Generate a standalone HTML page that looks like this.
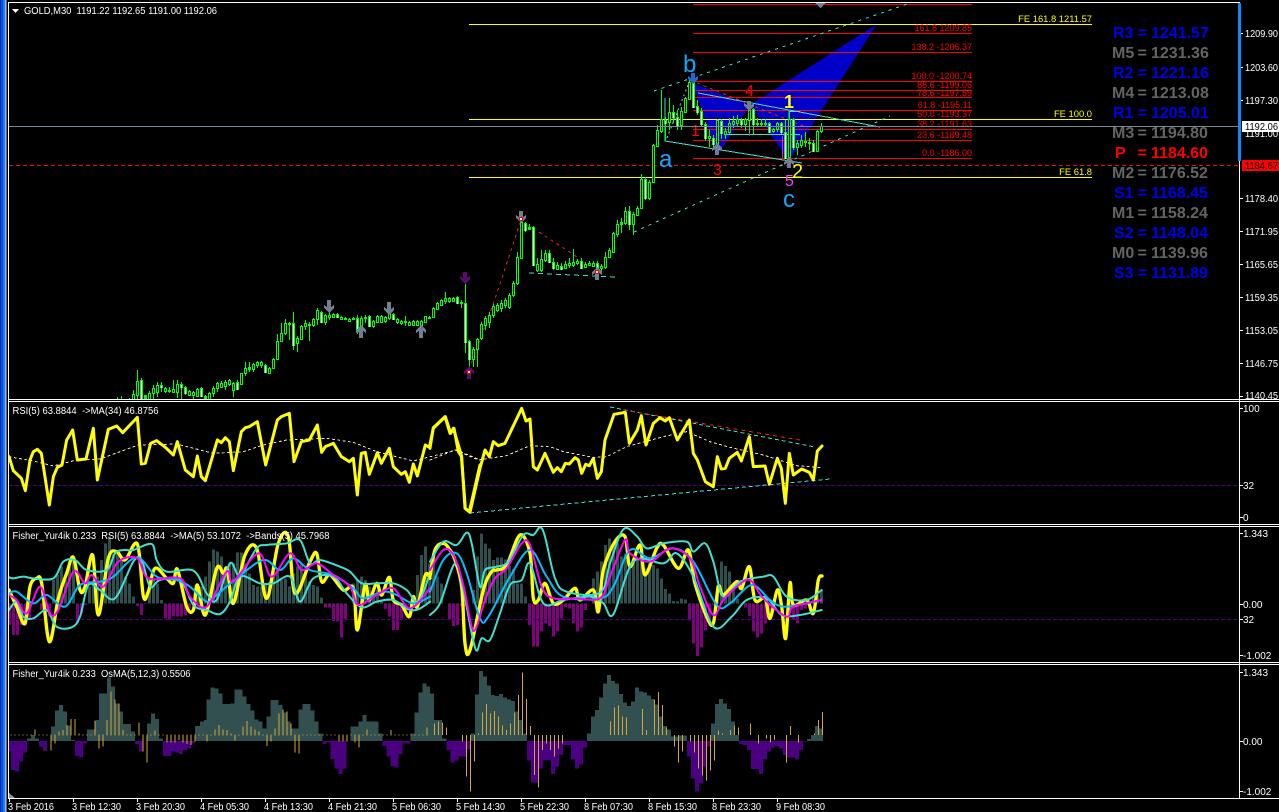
<!DOCTYPE html>
<html><head><meta charset="utf-8"><style>
html,body{margin:0;padding:0;background:#000;width:1279px;height:812px;overflow:hidden}
svg{display:block}
text{font-family:"Liberation Sans",sans-serif;white-space:pre}
.t{font-size:10px;fill:#fff}
.f{font-size:9px;fill:#f00}
.y{font-size:9.4px;fill:#ff0}
.p{font-size:16px;font-weight:bold}
.l{fill:none;stroke-linejoin:round;stroke-linecap:round}
</style></head><body>
<svg width="1279" height="812" viewBox="0 0 1279 812" xmlns="http://www.w3.org/2000/svg">
<defs>
<pattern id="st" x="3" y="0" width="4" height="10" patternUnits="userSpaceOnUse"><rect width="1" height="10" fill="#000"/></pattern>
<clipPath id="cp"><rect x="9" y="3" width="1230" height="396"/></clipPath>
<clipPath id="cr"><rect x="9" y="402" width="1230" height="122"/></clipPath>
<clipPath id="cf"><rect x="9" y="527" width="1230" height="135"/></clipPath>
<clipPath id="fu"><rect x="9" y="527" width="1230" height="77"/></clipPath>
<clipPath id="fd"><rect x="9" y="604" width="1230" height="58"/></clipPath>
<clipPath id="ou"><rect x="9" y="665" width="1230" height="76"/></clipPath>
<clipPath id="od"><rect x="9" y="741" width="1230" height="57"/></clipPath>
<path id="h1" d="M24 250V315h12V345h12V345h12V315h12V318h12V295h12V250h12V250h12V270h12V272h12V290h12V180h12V165h12V140h12V178h12V140h12V120h12V310h12V280h12V255h12V200h12V180h12V170h12V120h12V70h12V50h12V100h12V100h12V120h12V170h12V190h12V230h12V258h12V285h12V252h12V190h12V180h12V190h12V240h12V295h12V298h12V288h12V290h12V290h12V285h12V265h12V250h12V190h12V200h12V170h12V125h12V88h12V95h12V110h12V140h12V130h12V130h12V97h12V97h12V130h12V160h12V195h12V200h12V200h12V195h12V185h12V160h12V150h12V180h12V175h12V200h12V160h12V140h12V130h12V165h12V185h12V195h12V200h12V232h12V263h12V262h12V303h12V305h12V352h12V297h12V250h12V190h12V180h12V170h12V180h12V200h12V220h12V210h12V240h12V267h12V290h12V330h12V330h12V295h12V255h12V255h12V250h12V165h12V105h12V80h12V130h12V100h12V190h12V250z"/>
<path id="h2" d="M18 250V170h12V190h12V250h12V300h12V318h12V315h12V258h12V260h12V250h12V210h12V110h12V40h12V70h12V85h12V120h12V113h12V113h12V118h12V138h12V147h12V190h12V190h12V230h12V315h12V380h12V380h12V335h12V310h12V318h12V350h12V335h12V295h12V262h12V265h12V310h12V335h12V323h12V270h12V250h12V175h12V155h12V125h12V75h12V55h12V80h12V70h12V110h12V100h12V130h12V125h12V115h12V100h12V145h12V130h12V135h12V145h12V175h12V207h12V220h12V243h12V245h12V235h12V238h12V302h12V370h12V408h12V382h12V332h12V300h12V255h12V195h12V125h12V138h12V155h12V200h12V235h12V250h12V262h12V288h12V335h12V352h12V340h12V310h12V270h12V255h12V250h12V250h12V250h12V270h12V300h12V310h12V270h12V265h12V250h12V235h12V225h12V210h12V250z"/>
<path id="o1" d="M27 663V695H33V750H45V755H57V725H69V698H81V655H93V645H105V655H117V680H129V693H141V663H153V620H165V572H177V555H189V575H201V617H213V660H225V708H237V712H249V670H261V628H285V600H297V520H321V473H333V500H345V550H357V575H369V612H393V635H405V672H417V695H429V663H441V610H453V580H465V597H477V655H489V708H513V695H525V697H537V702H549V690H561V685H573V670H585V618H600V605H612V600H620V538H632V502H644V505H656V520H668V552H692V550H704V508H728V530H740V552H752V572H764V598H776V605H788V625H800V590H812V540H836V555H848V577H860V605H872V625H896V568H908V552H932V572H944V605H956V640H968V672H980V668H992V717H1004V745H1016V762H1028V745H1040V663H1052V620H1076V605H1088V585H1100V605H1136V640H1148V678H1160V710H1172V738H1184V742H1196V702H1208V670H1232V640H1244V578H1256V518H1268V490H1280V500H1290V663z"/>
<path id="o2" d="M0 663V520H12V600H36V655H50V690H62V728H74V722H86V710H108V688H122V640H135V523H147V453H159V470H171V497H183V525H195V528H207V522H219V532H231V538H243V543H255V575H267V600H279V640H291V722H303V788H327V745H339V720H363V762H375V740H387V703H399V675H423V718H435V745H447V733H459V682H471V640H483V590H495V570H507V533H519V490H531V465H543V483H555V490H567V522H579V548H591V558H603V545H615V503H627V515H639V518H651V527H663V537H675V553H687V590H699V618H711V628H723V650H747V647H771V710H783V775H795V815H807V790H819V740H831V680H843V610H855V552H867V537H879V550H891V567H903V605H915V645H927V672H939V675H951V690H963V747H987V762H999V718H1011V695H1023V682H1035V678H1047V685H1059V705H1071V712H1095V718H1107V690H1119V665H1131V657H1143V645H1155V618H1167V625H1179V663z"/>
</defs>
<rect width="1279" height="812" fill="#000"/>
<g shape-rendering="crispEdges">
<rect x="0" y="0" width="1" height="812" fill="#0033a8"/>
<rect x="1" y="0" width="2" height="812" fill="#0a50e0"/>
<rect x="3" y="0" width="2" height="812" fill="#1f78f8"/>
<rect x="5" y="0" width="1" height="812" fill="#8fb8e8"/>
<rect x="6" y="0" width="1" height="812" fill="#606870"/>
<!-- main pane lines -->
<g clip-path="url(#cp)">
<polygon points="692,83 718,155 750,105" fill="#0000c8"/>
<polygon points="750,105 789,161 877,24" fill="#0000c8"/>
<g stroke="#ff0" fill="none"><path d="M469 24.5H1092M469 119.5H1092M469 177.5H1092"/></g>
<g stroke="#f00" fill="none"><path d="M693 4.5H972M693 33.5H972M693 52.5H972M693 81.5H972M693 90.5H972M693 97.5H972M693 110.5H972M693 129.5H972M693 140.5H972M693 158.5H972"/></g>
<path d="M9 165.5H1239" stroke="#e01010" stroke-dasharray="4 3" fill="none"/>
<g fill="none" stroke="#40e0d0">
<path d="M654 91L925 -2M634 232L890 116" stroke-dasharray="3 5"/>
<path d="M529 273L616 277" stroke-dasharray="5 4"/>
<path d="M667 138L690 80" stroke-dasharray="2 3"/>
<path d="M665 98V141L802 163M698 93L880 127M727 134.5H800M711 126.5H800M789 111V120M789 111.5H800"/>
</g>
<g fill="none" stroke="#f02010" stroke-dasharray="3 4">
<path d="M697 83L808 128M469 370L496 296L520 223M539 232L577 257"/>
</g>
<path d="M749.5 120V136M782.5 136V158" stroke="#e020e0" fill="none"/>
<!-- candles -->
<g transform="translate(.5 0)" fill="none">
<path stroke="#0f0" d="M117 397V399M121 396V399M129 398V399M133 390V399M137 370V399M141 378V399M145 395V399M149 391V399M153 385V399M157 382V397M161 382V392M165 387V393M169 387V393M173 380V393M177 380V398M181 382V399M185 386V395M189 390V396M193 391V399M197 388V397M201 387V397M205 395V399M209 392V399M213 386V397M217 382V392M221 381V388M225 380V390M229 379V386M233 382V397M237 380V390M241 373V385M245 362V376M249 362V372M253 363V372M257 361V368M261 361V368M265 364V373M269 367V374M273 358V369M277 334V360M281 323V342M285 319V335M289 322V340M293 312V350M297 336V352M301 325V340M305 320V330M309 322V341M313 318V327M317 308V325M321 311V323M325 314V325M329 308V320M333 313V318M337 313V318M341 316V320M345 317V320M349 318V322M353 317V320M357 315V334M361 316V332M365 315V323M369 315V327M373 320V328M377 315V323M381 315V323M385 316V323M389 310V320M393 313V320M397 318V324M401 320V325M405 316V326M409 321V326M413 320V326M417 320V326M421 320V327M425 316V323M429 316V319M433 307V318M437 302V310M441 299V306M445 292V304M449 297V303M453 297V302M457 296V304M461 300V308M465 279V353M469 340V375M473 347V367M477 338V367M481 322V340M485 316V330M489 312V328M493 304V318M497 303V312M501 300V312M505 298V308M509 293V309M513 281V297M517 252V285M521 218V259M525 222V232M529 224V230M533 226V266M537 258V272M541 250V272M545 250V262M549 250V263M553 258V270M557 262V270M561 263V270M565 261V269M569 258V268M573 249V267M577 259V265M581 258V269M585 262V268M589 261V266M593 261V267M597 261V272M601 264V272M605 252V269M609 248V258M613 232V253M617 220V237M621 218V233M625 207V225M629 206V230M633 212V235M637 206V216M641 174V209M645 177V200M649 180V200M653 144V183M657 125V147M661 90V133M665 117V140M669 98V130M673 105V123M677 110V130M681 107V130M685 97V113M689 80V100M693 73V108M697 100V115M701 108V126M705 122V141M709 130V147M713 135V150M717 119V153M721 119V139M725 128V139M729 118V134M733 116V128M737 115V126M741 118V128M745 118V131M749 102V133M753 108V135M757 118V126M761 119V127M765 119V126M769 122V133M773 128V133M777 122V132M781 122V134M785 120V159M789 111V159M793 118V150M797 140V155M801 135V148M805 132V147M809 138V150M813 140V152M817 130V152M821 123V133"/>
<path stroke="#0f0" stroke-width="3" d="M133 394V399M137 381V396M141 380V399M145 395V399M149 393V399M153 388V394M157 385V393M161 385V388M165 388V392M169 390V392M173 389V393M177 384V393M181 384V388M185 387V394M189 391V396M193 392V396M197 389V397M201 388V397M205 396V399M209 393V399M213 388V394M217 383V389M221 383V388M225 382V387M229 380V385M233 383V391M237 382V390M241 373V385M245 368V374M249 367V370M253 364V370M257 362V366M261 362V366M265 365V373M269 368V374M273 359V369M277 341V360M281 333V342M285 323V334M289 323V325M293 323V346M297 338V344M301 326V340M305 323V327M309 324V326M313 319V326M317 310V320M321 312V323M325 315V323M329 315V318M333 314V318M337 314V318M341 317V320M345 318V320M349 319V322M353 318V320M357 318V332M361 318V332M365 317V319M369 316V327M373 321V327M377 316V323M381 316V323M385 317V322M389 313V319M393 314V320M397 319V323M401 321V324M405 321V323M409 322V326M413 321V326M417 321V326M421 321V326M425 316V323M429 317V319M433 308V318M437 303V310M441 300V306M445 298V302M449 298V302M453 298V302M457 297V304M461 302V304M465 303V343M469 341V360M473 349V360M477 339V350M481 324V339M485 318V326M489 315V323M493 306V316M497 305V311M501 303V309M505 300V306M509 295V308M513 283V296M517 257V284M521 222V259M525 223V231M529 227V230M533 227V266M537 264V271M541 259V271M545 253V261M549 253V263M553 262V269M557 265V270M561 266V270M565 264V269M569 263V266M573 262V266M577 261V264M581 261V269M585 264V268M589 263V266M593 263V267M597 263V271M601 266V269M605 257V268M609 250V258M613 233V253M617 224V235M621 222V225M625 211V224M629 211V225M633 214V225M637 208V216M641 179V209M645 179V199M649 182V199M653 145V183M657 130V147M661 119V132M665 120V124M669 112V123M673 112V118M677 117V126M681 111V126M685 98V113M689 82V100M693 82V108M697 106V113M701 111V125M705 124V139M709 136V139M713 138V145M717 120V146M721 121V134M725 131V135M729 123V133M733 121V125M737 119V124M741 120V125M745 119V125M749 110V121M753 109V125M757 123V125M761 123V125M765 123V125M769 123V133M773 129V132M777 123V130M781 123V133M785 132V159M789 119V158M793 119V148M797 143V148M801 140V146M805 141V143M809 142V144M813 143V152M817 131V152M821 126V132"/>
<path stroke="#000" d="M133 395V399M137 382V395M149 394V399M153 389V393M157 386V392M165 389V391M173 390V392M177 385V392M189 392V395M193 393V395M197 390V396M209 394V399M213 389V393M217 384V388M221 384V387M225 383V386M229 381V384M233 384V390M241 374V384M245 369V373M253 365V369M257 363V365M261 363V365M269 369V373M273 360V368M277 342V359M281 334V341M285 324V333M297 339V343M301 327V339M305 324V326M313 320V325M317 311V319M325 316V322M329 316V317M333 315V317M341 318V319M349 320V321M361 319V331M373 322V326M377 317V322M381 317V322M385 318V321M389 314V318M397 320V322M401 322V323M409 323V325M413 322V325M417 322V325M421 322V325M425 317V322M433 309V317M437 304V309M441 301V305M445 299V301M449 299V301M453 299V301M473 350V359M477 340V349M481 325V338M485 319V325M489 316V322M493 307V315M497 306V310M501 304V308M505 301V305M509 296V307M513 284V295M517 258V283M521 223V258M537 265V270M541 260V270M545 254V260M557 266V269M565 265V268M569 264V265M573 263V265M577 262V263M585 265V267M589 264V265M593 264V266M601 267V268M605 258V267M609 251V257M613 234V252M617 225V234M625 212V223M633 215V224M637 209V215M641 180V208M649 183V198M653 146V182M657 131V146M661 120V131M669 113V122M681 112V125M685 99V112M689 83V99M709 137V138M717 121V145M725 132V134M729 124V132M733 122V124M737 120V123M745 120V124M749 111V120M773 130V131M777 124V129M789 120V157M797 144V147M801 141V145M817 132V151M821 127V131"/>
<path stroke="#fff" d="M141 381V399M161 386V388M181 385V388M185 388V394M201 389V397M237 383V390M265 366V373M293 324V346M321 313V323M337 315V318M357 319V332M369 317V327M393 315V320M457 298V304M465 304V343M469 342V360M525 224V231M533 228V266M549 254V263M553 263V269M561 267V270M581 262V269M597 264V271M629 212V225M645 180V199M665 121V124M673 113V118M677 118V126M693 83V108M697 107V113M701 112V125M705 125V139M713 139V145M721 122V134M741 121V125M753 110V125M769 124V133M781 124V133M785 133V159M793 120V148M813 144V152"/>
</g>
<!-- arrows -->
<g fill="#708090">
<path d="M327 300h4v7l3-2v3l-5 5l-5-5v-3l3 2z"/>
<path d="M387 302h4v7l3-2v3l-5 5l-5-5v-3l3 2z"/>
<path d="M519 211h4v6l3-2v3l-5 5l-5-5v-3l3 2z"/>
<path d="M747 101h4v4l3-2v3l-5 5l-5-5v-3l3 2z"/>
<path d="M359 338h4v-7l3 2v-3l-5-5l-5 5v3l3-2z"/>
<path d="M419 338h4v-7l3 2v-3l-5-5l-5 5v3l3-2z"/>
<path d="M595 280h4v-7l3 2v-3l-5-5l-5 5v3l3-2z"/>
<path d="M715 155h4v-6l3 2v-3l-5-5l-5 5v3l3-2z"/>
<path d="M787 168h4v-5l3 2v-3l-5-5l-5 5v3l3-2z"/>
<path d="M815 3h11l-5.500 5z"/>
</g>
<g fill="#5a0a6e">
<path d="M463 272h4v6l3-2v3l-5 5l-5-5v-3l3 2z"/>
<path d="M467 379h4v-7l3 2v-3l-5-5l-5 5v3l3-2z"/>
</g>
<path d="M691 73h4v5l3-2v3l-5 5l-5-5v-3l3 2z" fill="#1e6ad0"/>
<g fill="#fff" stroke="#f00"><rect x="519.500" y="217.500" width="3" height="3"/><rect x="595.500" y="270.500" width="3" height="3"/><rect x="467.500" y="370.500" width="3" height="3"/></g>
</g>
<!-- RSI pane -->
<g clip-path="url(#cr)">
<path d="M9 485.500H1239" stroke="#4b0082" stroke-dasharray="4 2" fill="none"/>
<g fill="none" stroke="#40e0d0" stroke-dasharray="4 3">
<path d="M470 513L830 479M610 407L815 447"/>
</g>
<path d="M623 410L800 440" stroke="#f02010" stroke-dasharray="4 4" fill="none"/>
<g transform="translate(0 260) scale(.33333)" class="l" stroke="#ffe4c4" stroke-width="3" stroke-linecap="butt" stroke-dasharray="6 10">
<polyline points="27,590 100,603 160,618 230,600 300,597 360,575 415,555 530,552 640,580 730,575 790,555 860,540 980,535 1060,547 1130,575 1240,603 1370,570 1440,600"/>
</g>
<g transform="translate(430 395) scale(.33333)" class="l" stroke="#ffe4c4" stroke-width="3" stroke-linecap="butt" stroke-dasharray="6 10">
<polyline points="0,195 75,165 145,195 230,182 300,152 360,155 400,170 490,187 530,185 590,155 700,125 770,110 840,140 900,157 1000,180 1100,212 1170,218"/>
</g>
</g>
</g>
<g clip-path="url(#cr)">
<g transform="translate(0 260) scale(.33333)" class="l" stroke="#ff0" stroke-width="9">
<polyline points="27,590 40,632 64,655 76,692 90,600 100,575 112,568 124,580 148,735 160,650 172,622 186,615 200,540 218,510 232,600 258,597 280,505 292,660 325,508 350,498 368,518 412,472 424,612 436,610 452,550 470,542 496,562 520,585 532,545 556,630 580,650 592,588 604,650 616,662 652,540 664,548 676,533 688,545 700,632 724,515 736,503 748,500 772,485 797,615 832,480 844,470 868,460 882,605 904,545 928,540 952,495 965,577 976,560 988,555 1000,550 1024,590 1048,605 1060,595 1072,705 1084,580 1096,577 1108,643 1132,578 1144,610 1168,565 1180,620 1204,643 1216,635 1228,667 1240,612 1252,648 1276,555 1288,562 1300,505 1336,470 1352,520 1360,505 1384,585 1396,745 1408,755 1440,615"/>
</g>
<g transform="translate(430 395) scale(.33333)" class="l" stroke="#ff0" stroke-width="9">
<polyline points="0,160 10,98 45,65 60,115 72,100 85,170 95,185 105,340 120,352 150,220 165,165 178,185 190,140 205,152 225,145 275,40 288,78 300,72 310,215 322,225 345,175 370,232 382,218 394,230 406,205 418,207 435,188 445,195 455,235 467,208 478,212 490,190 502,250 514,230 525,135 552,58 586,52 598,145 622,105 634,62 648,150 670,85 690,68 706,78 718,68 742,135 778,75 790,175 802,195 826,260 850,275 862,185 874,222 886,220 898,190 922,172 934,198 958,125 970,215 1005,213 1018,268 1042,190 1054,220 1066,325 1078,175 1090,240 1115,222 1138,232 1150,255 1162,168 1176,153"/>
</g>
</g>
<!-- Fisher pane -->
<g shape-rendering="crispEdges">
<g clip-path="url(#fu)" fill="#2f4f4f"><g transform="translate(0 520) scale(.33333)"><use href="#h1"/></g><g transform="translate(430 520) scale(.33333)"><use href="#h2"/></g></g>
<g clip-path="url(#fd)" fill="#800080"><g transform="translate(0 520) scale(.33333)"><use href="#h1"/></g><g transform="translate(430 520) scale(.33333)"><use href="#h2"/></g></g>
<rect x="9" y="527" width="1230" height="135" fill="url(#st)"/>
<path d="M9 619.500H1239" stroke="#4b0082" stroke-dasharray="4 2" fill="none"/>
</g>
<g clip-path="url(#cf)">
<g transform="translate(0 520) scale(.33333)" class="l">
<polyline class="sm" stroke="#ff0" stroke-width="10" points="27,210 50,260 75,310 90,200 110,175 125,190 148,365 175,235 200,160 220,112 240,210 255,200 278,105 295,285 325,115 350,95 375,120 412,72 430,228 445,215 465,145 500,175 520,190 532,148 560,260 580,270 592,195 616,285 650,145 670,160 682,148 700,250 735,105 770,85 800,235 835,70 865,50 885,220 930,125 950,100 965,185 990,165 1030,210 1060,205 1072,330 1095,195 1108,240 1130,190 1145,225 1168,172 1180,240 1205,255 1228,290 1240,230 1252,260 1276,165 1290,175"/>
<polyline class="sm" stroke="#40e0d0" stroke-width="6" points="27,172 40,175 70,170 100,175 160,175 190,125 225,120 260,150 320,150 345,100 370,90 400,90 455,72 470,120 500,155 580,152 620,220 650,240 690,130 720,165 770,85 800,75 860,70 900,60 930,130 960,120 1020,140 1050,155 1085,190 1130,190 1180,190 1220,210 1255,245 1290,160"/>
<polyline class="sm" stroke="#40e0d0" stroke-width="6" points="27,270 50,245 70,290 100,295 140,270 170,320 215,322 240,290 265,195 300,210 345,235 400,125 425,120 450,200 480,180 540,178 580,255 620,270 660,282 690,245 720,170 780,190 820,190 870,170 900,245 940,175 1000,170 1040,220 1085,262 1130,245 1180,240 1225,268 1255,268 1290,245"/>
<polyline class="sm" stroke="#00bfff" stroke-width="6" points="27,220 50,215 100,250 140,225 195,260 240,195 300,185 340,170 410,112 470,170 530,180 570,200 620,245 650,225 710,175 790,120 840,150 880,115 930,150 1000,165 1060,205 1090,235 1150,215 1190,225 1240,250 1290,230"/>
<polyline class="sm" stroke="#f0f" stroke-width="6" points="27,225 50,240 80,280 120,200 150,280 175,270 220,155 255,190 275,165 310,200 355,125 412,115 445,175 540,175 570,230 620,260 680,155 700,185 775,100 815,170 870,100 905,150 950,130 1000,165 1050,200 1075,255 1130,225 1180,205 1230,265 1290,205"/>
</g>
<g transform="translate(430 520) scale(.33333)" class="l">
<polyline class="sm" stroke="#ff0" stroke-width="10" points="0,170 15,90 40,70 60,90 75,120 95,200 105,370 120,390 160,210 185,155 200,150 230,135 270,45 300,100 310,235 325,240 345,190 370,250 400,240 435,205 450,240 490,210 505,275 520,150 555,65 585,50 600,140 630,75 645,165 680,85 700,75 745,145 775,90 795,190 830,290 850,310 865,200 880,225 920,185 935,205 958,140 975,240 1005,235 1020,295 1042,210 1055,260 1067,355 1080,190 1090,255 1130,240 1150,280 1165,180 1176,168"/>
<polyline class="sm" stroke="#40e0d0" stroke-width="6" points="0,125 40,65 80,75 110,38 125,70 150,200 165,150 200,140 235,125 280,45 310,45 330,22 345,50 375,175 410,215 510,218 540,130 580,28 620,48 650,85 700,70 770,65 790,95 825,70 850,125 880,230 930,185 1000,170 1030,170 1070,230 1130,240 1175,210"/>
<polyline class="sm" stroke="#40e0d0" stroke-width="6" points="0,285 30,250 75,130 100,210 125,340 140,392 155,355 180,360 210,280 240,195 275,180 300,130 340,250 400,240 480,230 520,250 550,283 610,125 700,130 740,100 790,170 850,320 905,290 950,240 1010,235 1055,285 1110,285 1175,270"/>
<polyline class="sm" stroke="#00bfff" stroke-width="6" points="0,215 40,120 80,100 110,160 150,295 175,290 240,170 300,90 350,170 400,230 510,235 550,200 600,90 660,115 730,85 790,125 860,255 900,250 965,195 1020,240 1060,260 1130,250 1175,240"/>
<polyline class="sm" stroke="#f0f" stroke-width="6" points="0,150 40,90 70,105 100,195 125,320 140,320 165,240 195,175 230,145 275,70 300,75 335,200 370,235 440,235 510,235 540,170 585,60 600,100 660,125 720,85 780,115 810,200 850,285 880,240 920,200 960,180 1000,235 1070,290 1090,260 1175,240"/>
</g>
</g>
<!-- OsMA pane -->
<g shape-rendering="crispEdges">
<g clip-path="url(#ou)" fill="#325050"><g transform="translate(0 520) scale(.33333)"><use href="#o1"/></g><g transform="translate(430 520) scale(.33333)"><use href="#o2"/></g></g>
<g clip-path="url(#od)" fill="#4b0082"><g transform="translate(0 520) scale(.33333)"><use href="#o1"/></g><g transform="translate(430 520) scale(.33333)"><use href="#o2"/></g></g>
<g transform="translate(1.500 520) scale(.33333)" fill="none" stroke="#d4a63a" stroke-width="3">
<path d="M27 645H1287" stroke-width="4" stroke-dasharray="3 9"/>
<path d="M100 645V628M148 645V692M160 645V670M172 645V635M184 645V630M196 645V615M208 645V597M220 645V597M232 645V640M280 645V603M292 645V685M304 645V680M316 645V600M328 645V515M340 645V538M352 645V550M364 645V630M412 645V608M424 645V695M436 645V728M460 645V632M496 645V668M508 645V668M520 645V668M532 645V660M544 645V668M556 645V672M568 645V675M580 645V665M616 645V665M640 645V628M652 645V615M664 645V628M676 645V630M688 645V640M700 645V662M724 645V620M736 645V603M748 645V620M760 645V628M772 645V635M796 645V678M808 645V665M820 645V625M832 645V580M844 645V568M856 645V575M868 645V610M880 645V698M892 645V700M1012 645V665M1024 645V665M1036 645V665M1060 645V668M1072 645V683M1096 645V628M1168 645V630M1276 645V622"/>
</g>
<g transform="translate(431.500 520) scale(.33333)" fill="none" stroke="#d4a63a" stroke-width="3">
<path d="M9 645V610M21 645V605M33 645V607M45 645V622M93 645V665M105 645V770M117 645V815M129 645V725M141 645V640M153 645V578M165 645V552M177 645V580M189 645V573M201 645V590M213 645V617M225 645V630M237 645V610M249 645V578M261 645V525M273 645V457M285 645V537M297 645V618M309 645V765M321 645V803M333 645V690M345 645V670M357 645V690M369 645V710M381 645V685M393 645V670M537 645V605M549 645V562M561 645V557M573 645V590M585 645V592M633 645V567M645 645V630M669 645V540M681 645V516M693 645V555M705 645V622M729 645V680M741 645V728M753 645V695M777 645V665M789 645V698M801 645V745M813 645V767M825 645V782M837 645V752M849 645V722M861 645V632M873 645V640M897 645V630M909 645V617M921 645V622M957 645V610M981 645V670M1005 645V655M1017 645V668M1029 645V660M1065 645V728M1077 645V618M1101 645V668M1149 645V640M1161 645V600M1173 645V576"/>
</g>
<path d="M9 793L15 798H9z" fill="#8a94a4"/>
<!-- frame -->
<g fill="#fff">
<rect x="8" y="2" width="1232" height="1"/>
<rect x="8" y="2" width="1" height="797"/>
<rect x="8" y="399" width="1271" height="1"/>
<rect x="8" y="401" width="1271" height="1"/>
<rect x="8" y="524" width="1271" height="1"/>
<rect x="8" y="526" width="1271" height="1"/>
<rect x="8" y="662" width="1271" height="1"/>
<rect x="8" y="664" width="1271" height="1"/>
<rect x="8" y="798" width="1271" height="1"/>
<rect x="1239" y="2" width="1" height="797"/>
<path d="M1240 33h3v1h-3zM1240 67h3v1h-3zM1240 100h3v1h-3zM1240 198h3v1h-3zM1240 231h3v1h-3zM1240 264h3v1h-3zM1240 297h3v1h-3zM1240 330h3v1h-3zM1240 363h3v1h-3zM1240 396h3v1h-3zM1240 408h3v1h-3zM1240 485h3v1h-3zM1240 517h3v1h-3zM1240 533h3v1h-3zM1240 604h3v1h-3zM1240 619h3v1h-3zM1240 655h3v1h-3zM1240 672h3v1h-3zM1240 741h3v1h-3zM1240 791h3v1h-3z"/>
<path d="M9 799h1v3H9zM73 799h1v3h-1zM137 799h1v3h-1zM201 799h1v3h-1zM265 799h1v3h-1zM329 799h1v3h-1zM393 799h1v3h-1zM457 799h1v3h-1zM521 799h1v3h-1zM585 799h1v3h-1zM649 799h1v3h-1zM713 799h1v3h-1zM777 799h1v3h-1z"/>
</g>
<rect x="1238" y="3" width="3" height="158" fill="#0a8cff"/>
</g>
<!-- text -->
<path d="M12 9h7l-3.500 4z" fill="#fff"/>
<text class="t" x="24" y="14" textLength="193" lengthAdjust="spacingAndGlyphs">GOLD,M30  1191.22 1192.65 1191.00 1192.06</text>
<text class="t" x="12.500" y="414" textLength="146" lengthAdjust="spacingAndGlyphs">RSI(5) 63.8844  -&gt;MA(34) 46.8756</text>
<text class="t" x="12.500" y="539" textLength="317" lengthAdjust="spacingAndGlyphs">Fisher_Yur4ik 0.233  RSI(5) 63.8844  -&gt;MA(5) 53.1072  -&gt;Bands(5) 45.7968</text>
<text class="t" x="12.500" y="677" textLength="178" lengthAdjust="spacingAndGlyphs">Fisher_Yur4ik 0.233  OsMA(5,12,3) 0.5506</text>
<g class="axis">
<text class="t" x="1245" y="37" textLength="33" lengthAdjust="spacingAndGlyphs">1209.90</text>
<text class="t" x="1245" y="71" textLength="33" lengthAdjust="spacingAndGlyphs">1203.60</text>
<text class="t" x="1245" y="104" textLength="33" lengthAdjust="spacingAndGlyphs">1197.30</text>
<text class="t" x="1245" y="137" textLength="33" lengthAdjust="spacingAndGlyphs">1191.00</text>
<text class="t" x="1245" y="202" textLength="33" lengthAdjust="spacingAndGlyphs">1178.40</text>
<text class="t" x="1245" y="235" textLength="33" lengthAdjust="spacingAndGlyphs">1171.95</text>
<text class="t" x="1245" y="268" textLength="33" lengthAdjust="spacingAndGlyphs">1165.65</text>
<text class="t" x="1245" y="301" textLength="33" lengthAdjust="spacingAndGlyphs">1159.35</text>
<text class="t" x="1245" y="334" textLength="33" lengthAdjust="spacingAndGlyphs">1153.05</text>
<text class="t" x="1245" y="367" textLength="33" lengthAdjust="spacingAndGlyphs">1146.75</text>
<text class="t" x="1245" y="399" textLength="33" lengthAdjust="spacingAndGlyphs">1140.45</text>
<rect x="1242" y="121" width="37" height="11" fill="#fff"/>
<text x="1245" y="130" font-size="10" fill="#000" textLength="33" lengthAdjust="spacingAndGlyphs">1192.06</text>
<rect x="1242" y="160" width="37" height="11" fill="#f00"/>
<text x="1245" y="169" font-size="10" fill="#000" textLength="33" lengthAdjust="spacingAndGlyphs">1184.67</text>
<text class="t" x="1243" y="412">100</text>
<text class="t" x="1243" y="489">32</text>
<text class="t" x="1243" y="521">0</text>
<text class="t" x="1243" y="537">1.343</text>
<text class="t" x="1243" y="608">0.00</text>
<text class="t" x="1243" y="623">32</text>
<text class="t" x="1243" y="659">-1.002</text>
<text class="t" x="1243" y="676">1.343</text>
<text class="t" x="1243" y="745">0.00</text>
<text class="t" x="1243" y="795">-1.002</text>
</g>
<text class="t" x="8" y="810" textLength="46" lengthAdjust="spacingAndGlyphs">3 Feb 2016</text>
<text class="t" x="72" y="810" textLength="49" lengthAdjust="spacingAndGlyphs">3 Feb 12:30</text>
<text class="t" x="136" y="810" textLength="49" lengthAdjust="spacingAndGlyphs">3 Feb 20:30</text>
<text class="t" x="200" y="810" textLength="49" lengthAdjust="spacingAndGlyphs">4 Feb 05:30</text>
<text class="t" x="264" y="810" textLength="49" lengthAdjust="spacingAndGlyphs">4 Feb 13:30</text>
<text class="t" x="328" y="810" textLength="49" lengthAdjust="spacingAndGlyphs">4 Feb 21:30</text>
<text class="t" x="392" y="810" textLength="49" lengthAdjust="spacingAndGlyphs">5 Feb 06:30</text>
<text class="t" x="456" y="810" textLength="49" lengthAdjust="spacingAndGlyphs">5 Feb 14:30</text>
<text class="t" x="520" y="810" textLength="49" lengthAdjust="spacingAndGlyphs">5 Feb 22:30</text>
<text class="t" x="584" y="810" textLength="49" lengthAdjust="spacingAndGlyphs">8 Feb 07:30</text>
<text class="t" x="648" y="810" textLength="49" lengthAdjust="spacingAndGlyphs">8 Feb 15:30</text>
<text class="t" x="712" y="810" textLength="49" lengthAdjust="spacingAndGlyphs">8 Feb 23:30</text>
<text class="t" x="776" y="810" textLength="49" lengthAdjust="spacingAndGlyphs">9 Feb 08:30</text>
<g text-anchor="end">
<text class="y" x="1092" y="22">FE 161.8 1211.57</text>
<text class="y" x="1092" y="117">FE 100.0</text>
<text class="y" x="1092" y="175">FE 61.8</text>
<text class="f" x="972" y="31">161.8 1209.85</text>
<text class="f" x="972" y="50">138.2 -1206.37</text>
<text class="f" x="972" y="79">100.0 -1200.74</text>
<text class="f" x="972" y="88">88.6 -1199.06</text>
<text class="f" x="972" y="96">78.6 -1197.59</text>
<text class="f" x="972" y="108">61.8 -1195.11</text>
<text class="f" x="972" y="117">50.0 -1193.37</text>
<text class="f" x="972" y="127">38.2 -1191.63</text>
<text class="f" x="972" y="138">23.6 -1189.48</text>
<text class="f" x="972" y="156">0.0 -1186.00</text>
</g>
<text x="683" y="72" font-size="24" fill="#10a8ff">b</text>
<text x="659" y="167" font-size="24" fill="#10a8ff">a</text>
<text x="783" y="207" font-size="24" fill="#10a8ff">c</text>
<text x="784" y="108" font-size="18" font-weight="bold" fill="#ff0">1</text>
<text x="792" y="178" font-size="20" fill="#ff0">2</text>
<text x="785" y="186" font-size="16" fill="#ff40ff">5</text>
<text x="713" y="175" font-size="16" fill="#f00">3</text>
<text x="745" y="96" font-size="16" fill="#f00">4</text>
<text x="691" y="136" font-size="16" fill="#f00">1</text>
<g class="p">
<g fill="#0000e6"><text x="1113" y="38">R3</text><text x="1137.500" y="38">=</text><text x="1151" y="38">1241.57</text>
<text x="1113" y="78">R2</text><text x="1137.500" y="78">=</text><text x="1151" y="78">1221.16</text>
<text x="1113" y="118">R1</text><text x="1137.500" y="118">=</text><text x="1151" y="118">1205.01</text>
<text x="1114" y="198">S1</text><text x="1137.500" y="198">=</text><text x="1151" y="198">1168.45</text>
<text x="1114" y="238">S2</text><text x="1137.500" y="238">=</text><text x="1151" y="238">1148.04</text>
<text x="1114" y="278">S3</text><text x="1137.500" y="278">=</text><text x="1151" y="278">1131.89</text></g>
<g fill="#646464"><text x="1112" y="58">M5</text><text x="1137.500" y="58">=</text><text x="1151" y="58">1231.36</text>
<text x="1112" y="98">M4</text><text x="1137.500" y="98">=</text><text x="1151" y="98">1213.08</text>
<text x="1112" y="138">M3</text><text x="1137.500" y="138">=</text><text x="1151" y="138">1194.80</text>
<text x="1112" y="178">M2</text><text x="1137.500" y="178">=</text><text x="1151" y="178">1176.52</text>
<text x="1112" y="218">M1</text><text x="1137.500" y="218">=</text><text x="1151" y="218">1158.24</text>
<text x="1112" y="258">M0</text><text x="1137.500" y="258">=</text><text x="1151" y="258">1139.96</text></g>
<g fill="#f00"><text x="1115" y="158">P</text><text x="1137.500" y="158">=</text><text x="1151" y="158">1184.60</text></g>
</g>
<path d="M9 126.500H1239" stroke="#778899" shape-rendering="crispEdges"/>
</svg>
<script>
document.querySelectorAll('polyline.sm').forEach(function(e){
var p=e.getAttribute('points').trim().split(/\s+/).map(function(s){return s.split(',').map(Number)});
var d='M'+p[0];
for(var i=0;i<p.length-1;i++){
var a=p[i?i-1:0],b=p[i],c=p[i+1],f=p[i+2]||c;
d+='C'+[b[0]+(c[0]-a[0])/6,b[1]+(c[1]-a[1])/6,c[0]-(f[0]-b[0])/6,c[1]-(f[1]-b[1])/6,c[0],c[1]].join(' ');
}
var n=document.createElementNS('http://www.w3.org/2000/svg','path');
n.setAttribute('d',d);
n.setAttribute('stroke',e.getAttribute('stroke'));
n.setAttribute('stroke-width',e.getAttribute('stroke-width'));
e.parentNode.replaceChild(n,e);
});
</script>
</body></html>
